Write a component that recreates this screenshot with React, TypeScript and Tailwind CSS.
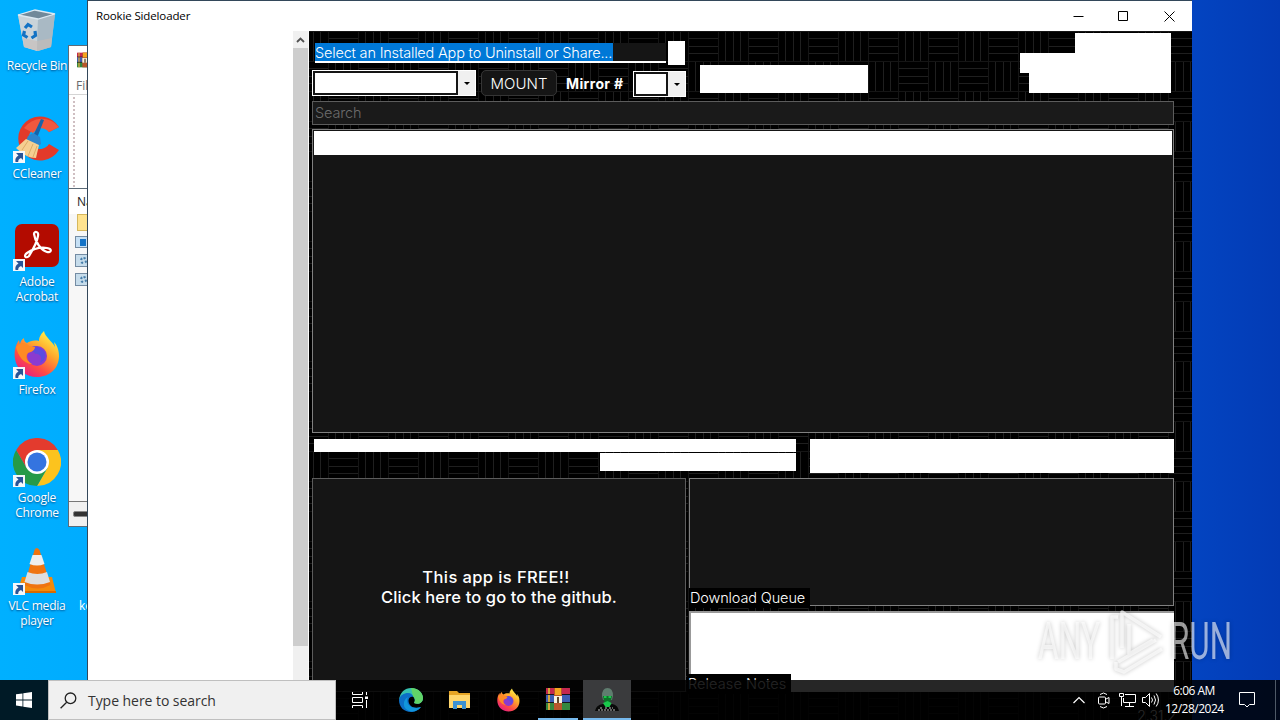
import React from "react";

function Shortcut() {
  return (
    <svg className="absolute left-0 bottom-0 h-3 w-3" viewBox="0 0 12 12">
      <path d="M0 0h12v12H0z" fill="#f4f7fa" />
      <path d="M3 2h7v7L8 7Q5 8 5.200 11H2.500Q1.500 6.500 5.500 4.500z" fill="#2a5496" />
    </svg>
  );
}

function RecycleBin() {
  return (
    <svg viewBox="0 0 44 44" className="h-11 w-11">
      <path d="M3 7 20 2l20 4-4 33-13 4-14-4z" fill="#a9c0d0" />
      <path d="m3 7 20 4-1 32-13-4z" fill="#c9d3d9" />
      <path d="m23 11 17-5-4 33-14 4z" fill="#a9b9c4" />
      <path d="m3 7 17-5 20 4-17 5z" fill="#71899a" stroke="#dce9f2" strokeWidth="1.300" />
      <path d="m8 30 14 3 15-3-1 9-13 4-14-4z" fill="#c8bdb5" opacity=".6" />
      <path d="m10 20 3-3.500 4 2.500M20 23l.5 4.500-4 2.500M12.500 29.500 8.500 27l1-4" fill="none" stroke="#1272c4" strokeWidth="3.200" />
    </svg>
  );
}

function CCleaner() {
  return (
    <svg viewBox="0 0 48 48" className="h-12 w-12">
      <path d="M46 13A22 22 0 1 0 46 36L36 30A11 11 0 1 1 36 18z" fill="#e23a2a" />
      <path d="M46 13A22 22 0 0 0 11 14L20 19Q28 10 36 18z" fill="#f0583e" />
      <path d="m28 5 3 1-7 18-4-2z" fill="#1664aa" />
      <path d="m15 22 5-3 7 4 1 7-4 3-11-6z" fill="#2c86ce" />
      <path d="m13 25 13 6-3 13q-10 0-20-10z" fill="#f5cf91" />
      <path d="m15 27-6 9M20 30l-5 12M24 32l-4 11" stroke="#d6a25c" strokeWidth=".8" />
    </svg>
  );
}

function Acrobat() {
  return (
    <svg viewBox="0 0 46 46" className="h-[46px] w-[46px]">
      <rect x="1" y="1" width="44" height="43" rx="7" fill="#b30b00" />
      <path d="M20 11c0-3 5-3 4 2-1 7-6 15-9 20-3 3-6 0-2-3 6-4 14-6 20-5 6 1 4 5 0 4-6-2-12-10-13-18z" fill="none" stroke="#fff" strokeWidth="2.200" />
    </svg>
  );
}

function Firefox({ className }: { className: string }) {
  const id = React.useId();
  return (
    <svg viewBox="0 0 46 48" className={className}>
      <defs>
        <linearGradient id={id} x1=".85" y1=".1" x2=".25" y2="1">
          <stop offset="0" stopColor="#fff04a" />
          <stop offset=".35" stopColor="#ffa72c" />
          <stop offset=".7" stopColor="#ff4b45" />
          <stop offset="1" stopColor="#e51b87" />
        </linearGradient>
      </defs>
      <path d="M30 1c-4 4-5 7-5 10-5-1-9 0-12 2-2-1-3-2-3-5-3 2-4 4-4 7l-1-5C1 16 0 22 1 29c2 11 11 18 22 18 13 0 22-9 22-21 0-6-2-11-5-14l1 5C38 11 31 7 30 1z" fill={`url(#${id})`} />
      <circle cx="23" cy="26" r="10" fill="#8a3bd0" />
      <path d="M14 20q6-8 16 1c3 4 1 10-4 12 3-6-1-10-5-9 0-3-4-2-7-4z" fill="#5b4be0" />
      <path d="M2 17c4-5 10-5 13-1l6 1c0 3-3 5-7 6-4 4 0 9 4 11-8 0-14-8-16-17z" fill="#ff8a25" />
    </svg>
  );
}

function Chrome() {
  return (
    <svg viewBox="0 0 48 48" className="h-12 w-12">
      <path d="M24 12h20.800A24 24 0 0 1 24 48l10.400-18z" fill="#fcc31e" />
      <path d="M3.200 12A24 24 0 0 0 24 48l10.400-18-20.800 0z" fill="#269a48" />
      <path d="M3.200 12A24 24 0 0 1 44.800 12H24L13.600 30z" fill="#e33b2e" />
      <circle cx="24" cy="24" r="12" fill="#fff" />
      <circle cx="24" cy="24" r="9.500" fill="#3474e0" />
    </svg>
  );
}

function Vlc() {
  return (
    <svg viewBox="0 0 48 48" className="h-12 w-12">
      <path d="M9 31h30l4 16H4z" fill="#f58a0b" />
      <path d="M4 45h39v2H4z" fill="#d86a00" />
      <path d="M21.500 4q2-4 5 0l11 35q-13 7-26 0z" fill="#ef7410" />
      <path d="m19.500 9h9l3 9q-7.500 3-15 0z" fill="#eee" />
      <path d="m14.500 26q10 4 19.500 0l3 10q-13 5-25.500 0z" fill="#dedede" />
    </svg>
  );
}

function WinRar({ className }: { className: string }) {
  return (
    <svg viewBox="0 0 24 24" className={className}>
      <path d="M0 1h24v7H0z" fill="#c4284f" />
      <path d="M0 8h24v7H0z" fill="#3d5db4" />
      <path d="M0 15h24v8H0z" fill="#34883f" />
      <path d="M2 1h2v22H2z" fill="#d5a73d" />
      <path d="M0 7.500h24M0 15.500h24" stroke="#16141c" />
      <path d="M8 1h8v22H8z" fill="#b9562b" />
      <path d="M9 1h6v7H9z" fill="#f3a51e" />
      <path d="M8 9h8v7H8z" fill="#f8f2df" />
      <path d="M11 10h2v6h-2z" fill="#61482c" />
    </svg>
  );
}

function DesktopIcon({ label, link = true, children }: { label: string[]; link?: boolean; children: React.ReactNode }) {
  return (
    <div className="flex h-[108px] w-[74px] flex-col items-center text-center">
      <div className="relative flex h-[50px] w-12 items-center justify-center">
        {children}
        {link && <Shortcut />}
      </div>
      <div className="mt-[3px] text-[12px] leading-[15px] tracking-[-0.2px] whitespace-nowrap text-white [text-shadow:0_1px_2px_#004a88]">
        {label.map((l) => (
          <div key={l}>{l}</div>
        ))}
      </div>
    </div>
  );
}

function Weave() {
  const h = (x: number, y: number) => `M${x} ${y + 7.5}h30M${x} ${y + 15.5}h30M${x} ${y + 22.5}h30`;
  const v = (x: number, y: number) => `M${x + 7.5} ${y}v30M${x + 15.5} ${y}v30M${x + 22.5} ${y}v30`;
  return (
    <svg className="absolute inset-0 h-full w-full">
      <defs>
        <pattern id="weave" x="19" y="0" width="60" height="60" patternUnits="userSpaceOnUse">
          <path d="M0 0h60v60H0z" fill="#000" />
          <path d={h(0, 0) + v(30, 0) + v(0, 30) + h(30, 30)} stroke="#1f1f1f" />
          <path d="M0 .5h60M0 30.500h60M.5 0v60M30.500 0v60" stroke="#151515" />
        </pattern>
      </defs>
      <rect width="100%" height="100%" fill="url(#weave)" />
    </svg>
  );
}

function Combo({ className }: { className: string }) {
  return (
    <div className={`flex h-[26px] border border-white bg-[#f0f0f0] ${className}`}>
      <div className="flex-1 border-2 border-[#151515] bg-white" />
      <div className="flex w-[17px] items-center justify-center pl-px">
        <svg width="6" height="3" viewBox="0 0 6 3"><path d="M0 0h6L3 3z" fill="#000" /></svg>
      </div>
    </div>
  );
}

function ArchiveWindow() {
  return (
    <div className="absolute left-[68px] top-[45px] flex h-[482px] w-[60px] flex-col border border-[#5c6b78] bg-white">
      <div className="flex h-[30px] items-start pt-[6px] pl-2"><WinRar className="h-4 w-4" /></div>
      <div className="h-[19px] border-b border-[#d5d5d5] pl-[7px] text-[12px] leading-[19px] text-[#6a6a6a]">File</div>
      <div className="h-[93px] pt-[2px] pl-1">
        <div className="flex h-[90px] items-end border-l-2 border-dotted border-[#cfbfc2] pb-[13px] pl-[12px]"><div className="h-[3px] w-[3px] bg-[#555]" /></div>
      </div>
      <div className="h-[26px] border-t border-[#5c6b78] pl-[8px] text-[12px] leading-[26px] text-[#222]">Name</div>
      <div className="flex flex-1 flex-col bg-[#f7f7f7] pl-[6px]">
        <div className="ml-[2px] h-[17px] w-6 border border-[#d6b85d] bg-[#ffe38f]" />
        <div className="mt-[5px] flex h-[12px] w-6 items-center border border-[#748ca3] bg-[#c6e0f5] pl-1"><div className="h-[7px] w-[6px] bg-[#1473c7]" /></div>
        <div className="mt-[6px] flex h-[13px] w-6 items-center border border-[#748ca3] bg-[#c6dceb] pl-1"><div className="h-[7px] w-[7px] rounded-full border-2 border-dotted border-[#477eaa]" /></div>
        <div className="mt-[6px] flex h-[13px] w-6 items-center border border-[#748ca3] bg-[#c6dceb] pl-1"><div className="h-[7px] w-[7px] rounded-full border-2 border-dotted border-[#477eaa]" /></div>
      </div>
      <div className="flex h-[25px] items-center border-t border-[#777] bg-[#f0f0f0] pl-1"><div className="h-[6px] w-8 rounded-xs border border-[#888] bg-[#333]" /></div>
    </div>
  );
}

function SideloaderWindow() {
  return (
    <div className="absolute left-[87px] top-0 flex h-[720px] w-[1105px] flex-col border-t border-l border-[#33475a] bg-white">
      <div className="flex h-[30px] shrink-0 items-center justify-between pl-[8px]">
        <span className="text-[11.5px] tracking-[-0.13px] text-black">Rookie Sideloader</span>
        <div className="flex">
          <div className="flex w-[46px] justify-center"><svg width="11" height="11"><path d="M.5 5.500h10" stroke="#000" /></svg></div>
          <div className="flex w-[45px] justify-center"><svg width="11" height="11"><path d="M.5 .5h9v9h-9z" fill="none" stroke="#000" /></svg></div>
          <div className="flex w-[46px] justify-center"><svg width="11" height="11"><path d="m.5.5 10 10m0-10-10 10" stroke="#000" /></svg></div>
        </div>
      </div>
      <div className="flex min-h-0 flex-1">
        <div className="w-[205px]" />
        <div className="flex w-[16px] flex-col border-r border-[#fafafa] bg-[#f0f0f0]">
          <div className="flex h-[17px] items-center justify-center"><svg width="9" height="6"><path d="m1 5 3.500-3.500L8 5" fill="none" stroke="#505050" strokeWidth="1.800" /></svg></div>
          <div className="h-[598px] bg-[#cdcdcd]" />
        </div>
        <div className="relative w-[883px] overflow-hidden bg-black font-['Inter','Liberation_Sans',sans-serif]">
          <Weave />
          <div className="relative flex h-full flex-col pl-[3px] pr-[18px]">
            <div className="flex h-[70px] shrink-0">
              <div className="flex w-[374px] flex-col">
                <div className="flex pt-[10px] pl-[3px]">
                  <div className="mt-[2px] h-5 w-[351px] border-b-2 border-white bg-[#151515]">
                    <span className="block h-[18px] w-[298px] bg-[#0078d7] text-[14.5px] leading-[19px] font-light tracking-[-0.18px] whitespace-nowrap text-white">Select an Installed App to Uninstall or Share...</span>
                  </div>
                  <div className="ml-[2px] h-[24px] w-[17px] bg-white" />
                </div>
                <div className="mt-[5px] flex">
                  <Combo className="w-[164px]" />
                  <div className="ml-[5px] flex h-[26px] w-[76px] items-center justify-center rounded-[5px] border border-[#353535] bg-[#151515] pt-[2px] text-[15px] font-light text-white">MOUNT</div>
                  <div className="ml-[9px] w-[67px] text-[14px] leading-[28px] font-bold tracking-[0.35px] whitespace-nowrap text-white">Mirror #</div>
                  <Combo className="mt-px w-[53px]" />
                </div>
              </div>
              <div className="mt-[34px] ml-[14px] h-[28px] w-[168px] bg-white" />
              <div className="mt-[2px] mr-[3px] ml-auto flex w-[151px] flex-col items-end">
                <div className="h-5 w-24 bg-white" />
                <div className="h-5 w-[151px] bg-white" />
                <div className="h-5 w-[142px] bg-white" />
              </div>
            </div>
            <div className="h-6 shrink-0 border border-[#5c5c5c] bg-[#1a1a1a] pl-[2px] text-[14.5px] leading-[22px] font-light tracking-[-0.15px] text-[#6c6c6c]">Search</div>
            <div className="mt-[4px] h-[304px] shrink-0 border border-[#808080] bg-[#151515] p-px"><div className="h-[24px] bg-white" /></div>
            <div className="flex h-[45px] shrink-0 pt-[6px]">
              <div className="ml-[2px] flex w-[482px] flex-col items-end">
                <div className="h-[13px] w-full bg-white" />
                <div className="mt-px h-[18px] w-[196px] bg-white" />
              </div>
              <div className="ml-[14px] h-[34px] flex-1 bg-white" />
            </div>
            <div className="flex h-[214px] shrink-0">
              <div className="flex w-[374px] flex-col items-center border border-[#5c5c5c] bg-[#151515] pt-[88px] text-center text-[16.5px] leading-5 font-medium tracking-[0.12px] text-white">
                <div className="pr-[6px] tracking-[0.4px]">This app is FREE!!</div>
                <div>Click here to go to the github.</div>
              </div>
              <div className="ml-[3px] flex w-[485px] flex-col">
                <div className="relative h-[128px] shrink-0 border border-[#808080] bg-[#151515]">
                  <div className="absolute -left-px top-[109px] h-[20px] w-[121px] bg-black pl-px text-[14.5px] leading-[20px] font-light tracking-[-0.13px] whitespace-nowrap text-white">Download Queue</div>
                </div>
                <div className="relative mt-[5px] flex-1 border-2 border-r-0 border-b-0 border-[#999] bg-white">
                  <div className="absolute -left-[4px] top-[61px] h-[20px] w-[104px] bg-black pl-px text-[14.5px] leading-[20px] font-light tracking-[0.1px] whitespace-nowrap text-[#e8e8e8]">Release Notes</div>
                </div>
              </div>
            </div>
            <div className="flex justify-end pt-[16px] text-[14px] leading-[16px] font-light text-white"><span className="-mr-[2px]">2.31.2</span></div>
          </div>
        </div>
      </div>
    </div>
  );
}

function Watermark() {
  return (
    <svg className="absolute left-[1034px] top-[604px] h-[74px] w-[204px] [filter:drop-shadow(0_0_2px_rgba(0,0,0,0.35))]" viewBox="0 0 204 74">
      <g fill="#fff" opacity=".6" fontFamily="Roboto, sans-serif" fontSize="51" fontWeight="400">
        <text x="4" y="55" textLength="62" lengthAdjust="spacingAndGlyphs">ANY</text>
        <text x="136" y="55" textLength="62" lengthAdjust="spacingAndGlyphs">RUN</text>
      </g>
      <g fill="none" stroke="#fff" strokeWidth="3.500" strokeLinejoin="round" opacity=".65">
        <path d="M78 55V13h6M88 44V8l39 25M82 58v7l8 3 38-23" />
        <path d="M95 20v30l24-14M84 58l38-22" />
      </g>
    </svg>
  );
}

function Taskbar() {
  return (
    <div className="absolute inset-x-0 bottom-0 flex h-10 bg-black/85 text-white">
      <div className="flex w-12 items-center justify-center">
        <svg width="16" height="16" viewBox="0 0 16 16" fill="#fff"><path d="m0 2.300 6.500-.9v6.100H0zM7.300 1.300 16 0v7.500H7.300zM0 8.400h6.500v6.100L0 13.600zM7.300 8.400H16V16l-8.700-1.300z" /></svg>
      </div>
      <div className="flex w-72 items-center border border-[#bfbfbf] bg-[#f0f0f0] pl-[11px]">
        <svg width="17" height="17" viewBox="0 0 17 17" fill="none" stroke="#222" strokeWidth="1.300"><circle cx="10.500" cy="6.300" r="5.300" /><path d="M6.700 10.200.6 16.300" /></svg>
        <span className="ml-[11px] text-[14px] tracking-[-0.05px] text-[#333]">Type here to search</span>
      </div>
      <div className="flex w-12 items-center justify-center">
        <svg width="18" height="16" viewBox="0 0 18 16" fill="none" stroke="#fff"><path d="M1.500 0v2.500h10V0M1.500 16v-2.500h10V16M1.500 5.500h10v5h-10zM15.500 0v3M15.500 8v8" /><path d="M14 4.500h3v2.500h-3z" fill="#fff" stroke="none" /></svg>
      </div>
      <div className="flex w-[53px] items-center justify-center">
        <svg width="24" height="24" viewBox="0 0 24 24">
          <path d="M0 12C1 4 6 0 12 0c8 0 12 6 12 10 0 5-5 7-9 5 2-3 0-8-5-8-5-1-8 2-10 5z" fill="#35c1b1" />
          <path d="M12 0c8 0 12 6 12 10 0 5-5 7-9 5 2-3 1-5-1-7z" fill="#61d468" />
          <path d="M0 12c1-5 5-7 9-7 3 0 5 2 5 4-4-1-6 4-3 8 2 3 7 4 11 2-3 4-7 5-10 5C5 24 0 19 0 12z" fill="#0c6fc7" />
          <path d="M9 9c-3 6 2 13 13 10-4 5-11 6-15 2S5 11 9 9z" fill="#1196dc" />
        </svg>
      </div>
      <div className="flex w-[45px] items-center justify-center">
        <svg width="21" height="18" viewBox="0 0 21 18"><path d="M0 0h8l2 2h11v15H0z" fill="#e6a526" /><path d="M0 4h21v13H0z" fill="#ffd66d" /><path d="M4 10h13v8h-4v-4H8v4H4z" fill="#3c91d2" /></svg>
      </div>
      <div className="flex w-[52px] items-center justify-center pl-px"><Firefox className="h-6 w-[23px]" /></div>
      <div className="ml-[4px] flex w-10 items-center justify-center border-b-2 border-[#76b9ed]"><WinRar className="h-6 w-6" /></div>
      <div className="ml-[5px] flex w-12 items-center justify-center border-b-2 border-[#76b9ed] bg-[#3a3b3d]">
        <svg width="24" height="25" viewBox="0 0 24 25"><path d="M7 9q0-8 5.500-8Q18 1 18 9l-1 4H8z" fill="#5f7d6f" /><path d="M8 9h9l-1 4-2 3v3h-3v-3l-2-2z" fill="#0c7428" /><path d="M0 24q1-6 8-7l4.500 2 4.500-2q6 1 7 7z" fill="#080908" /><path d="m8 16 4.500-2 4 2-2 4h-4zM9 9h2.500v2H9zM13.500 9H16v2h-2.500z" fill="#19c84b" /><path d="M5 21h3m2 0h2m2 0h4M3 23h18" stroke="#bbb" strokeDasharray="2 1" /></svg>
      </div>
      <div className="ml-auto flex items-center">
        <svg width="12" height="8" fill="none" stroke="#fff" strokeWidth="1.200"><path d="m.5 7 5.500-5.500L11.500 7" /></svg>
        <svg className="ml-[13px]" width="12" height="17" viewBox="0 0 12 17" fill="none" stroke="#fff"><rect x=".5" y="5" width="7" height="7" rx="1" /><path d="m8 7 3-1.500v6L8 10M2 2.500Q5.500-.5 9 2.500M2 14.500q3.500 3 7 0" /></svg>
        <svg className="ml-[9px]" width="17" height="14" viewBox="0 0 17 14" fill="none" stroke="#fff"><path d="M6 1.500h10.500v8H4.500V5M10.500 10v3M6 13.500h9M.5.500h4v3h-4zM2.500 4v9" /></svg>
        <svg className="ml-[6px]" width="17" height="14" viewBox="0 0 17 14" fill="none" stroke="#fff"><path d="M.5 4.500h3l4-4v13l-4-4h-3zM9.500 4.500q2 2.500 0 5M12 2.500q3 4.500 0 9M14.200.5q4.500 6.500 0 13" /></svg>
        <div className="ml-[6px] w-[58px] text-center text-[12px] leading-[18px] tracking-[-0.5px] whitespace-nowrap"><div>6:06 AM</div><div>12/28/2024</div></div>
        <svg className="ml-[16px]" width="17" height="16" fill="none" stroke="#fff"><path d="M.5.5h15v12h-5L8 15l-2.500-2.500h-5z" /></svg>
        <div className="ml-[19px] h-10 w-[5px] border-l border-[#4e5967]" />
      </div>
    </div>
  );
}

export default function App() {
  return (
    <div className="relative h-[720px] w-[1280px] overflow-hidden bg-[linear-gradient(90deg,#00b0ff_0%,#00aaff_10%,#0348c6_90%,#033bb5_100%)] font-['Open_Sans','Noto_Sans',sans-serif]">
      <div className="absolute left-0 top-[5px] flex flex-col">
        <DesktopIcon label={["Recycle Bin"]} link={false}><RecycleBin /></DesktopIcon>
        <DesktopIcon label={["CCleaner"]}><CCleaner /></DesktopIcon>
        <DesktopIcon label={["Adobe", "Acrobat"]}><Acrobat /></DesktopIcon>
        <DesktopIcon label={["Firefox"]}><Firefox className="h-12 w-[46px]" /></DesktopIcon>
        <DesktopIcon label={["Google", "Chrome"]}><Chrome /></DesktopIcon>
        <DesktopIcon label={["VLC media", "player"]}><Vlc /></DesktopIcon>
      </div>
      <div className="absolute left-[79px] top-[598px] text-[12px] leading-[15px] text-white">ke</div>
      <ArchiveWindow />
      <SideloaderWindow />
      <Watermark />
      <Taskbar />
    </div>
  );
}
